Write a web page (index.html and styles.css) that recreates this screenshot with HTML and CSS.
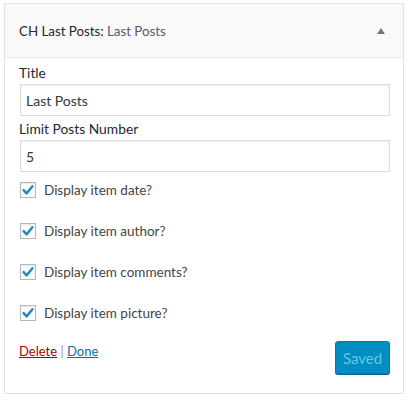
FILE: index.html
```html
<!DOCTYPE html>
<html>
<head>
<meta charset="utf-8">
<link rel="stylesheet" href="styles.css">
</head>
<body>
<div class="card">
  <div class="head">
    <h3 class="head-title"><span class="strong">CH Last Posts:</span> <span class="sub">Last Posts</span></h3>
    <span class="arrow"></span>
  </div>
  <div class="body">
    <label class="field-label">Title</label>
    <div class="input">Last Posts</div>
    <label class="field-label second">Limit Posts Number</label>
    <div class="input">5</div>
    <div class="checks">
      <div class="check"><span class="box"><svg viewBox="0 0 16 16" width="16" height="16"><path d="M3.6 8.2 L6.6 11.4 L12.4 4.2" fill="none" stroke="#1e8cbe" stroke-width="2.5" stroke-linecap="round" stroke-linejoin="round"/></svg></span>Display item date?</div>
      <div class="check"><span class="box"><svg viewBox="0 0 16 16" width="16" height="16"><path d="M3.6 8.2 L6.6 11.4 L12.4 4.2" fill="none" stroke="#1e8cbe" stroke-width="2.5" stroke-linecap="round" stroke-linejoin="round"/></svg></span>Display item author?</div>
      <div class="check"><span class="box"><svg viewBox="0 0 16 16" width="16" height="16"><path d="M3.6 8.2 L6.6 11.4 L12.4 4.2" fill="none" stroke="#1e8cbe" stroke-width="2.5" stroke-linecap="round" stroke-linejoin="round"/></svg></span>Display item comments?</div>
      <div class="check"><span class="box"><svg viewBox="0 0 16 16" width="16" height="16"><path d="M3.6 8.2 L6.6 11.4 L12.4 4.2" fill="none" stroke="#1e8cbe" stroke-width="2.5" stroke-linecap="round" stroke-linejoin="round"/></svg></span>Display item picture?</div>
    </div>
    <div class="actions">
      <div class="links"><a class="del" href="#">Delete</a> <span class="sep">|</span> <a class="done" href="#">Done</a></div>
      <button class="saved" disabled>Saved</button>
    </div>
  </div>
</div>
</body>
</html>
```
FILE: styles.css
```css
html, body { margin: 0; padding: 0; background: #fff; }
body { font-family: "Lato", "Open Sans", sans-serif; font-size: 14px; color: #32373c; }
.card {
  margin: 3px 0 0 4px;
  width: 400px;
  height: 391px;
  box-sizing: border-box;
  border: 1px solid #e2e2e2;
  background: #fff;
}
.head {
  height: 53px;
  background: #f9f9f9;
  border-bottom: 1px solid #e5e5e5;
  display: flex;
  align-items: center;
  justify-content: space-between;
  padding: 0 18px 0 14px;
}
.head-title { margin: 0; font-size: 13.3px; font-weight: 400; }
.strong { color: #23282d; }
.sub { color: #555d66; }
.arrow {
  width: 0; height: 0;
  border-left: 4px solid transparent;
  border-right: 4px solid transparent;
  border-bottom: 6px solid #72777c;
}
.body { padding: 0 13px 0 14px; display: flex; flex-direction: column; }
.field-label { display: block; line-height: 20px; margin-top: 5px; color: #23282d; font-size: 13.8px; }
.field-label.second { margin-top: 3px; }
.field-label + .input { margin-top: 1px; }
.input {
  margin-left: 1px;
  height: 32px;
  box-sizing: border-box;
  border: 1px solid #ddd;
  box-shadow: inset 0 1px 2px rgba(0,0,0,.07);
  padding: 0 5px;
  display: flex;
  align-items: center;
  font-size: 14px;
  color: #32373c;
}
.checks { display: flex; flex-direction: column; gap: 25px; margin-top: 10px; }
.check { display: flex; align-items: center; height: 16px; font-size: 13.5px; color: #444; }
.box {
  width: 16px; height: 16px;
  box-sizing: border-box;
  border: 1px solid #b4b9be;
  box-shadow: inset 0 1px 2px rgba(0,0,0,.1);
  margin: 0 8px 0 1px;
  display: flex;
  align-items: center;
  justify-content: center;
  position: relative;
}
.box svg { position: absolute; left: -1px; top: -1px; }
.actions { display: flex; justify-content: space-between; align-items: flex-start; margin-top: 20px; }
.links { font-size: 13px; color: #999; line-height: 20px; }
.del { color: #a00; }
.done { color: #0073aa; }
.saved {
  margin-top: 0;
  width: 55px; height: 33px;
  background: #008ec2;
  border: 1px solid #007cb2;
  border-radius: 3px;
  color: #66c6e4;
  font-family: "Lato", "Open Sans", sans-serif;
  font-size: 15px;
  padding: 0;
  box-shadow: 0 1px 0 #006799;
}
```
